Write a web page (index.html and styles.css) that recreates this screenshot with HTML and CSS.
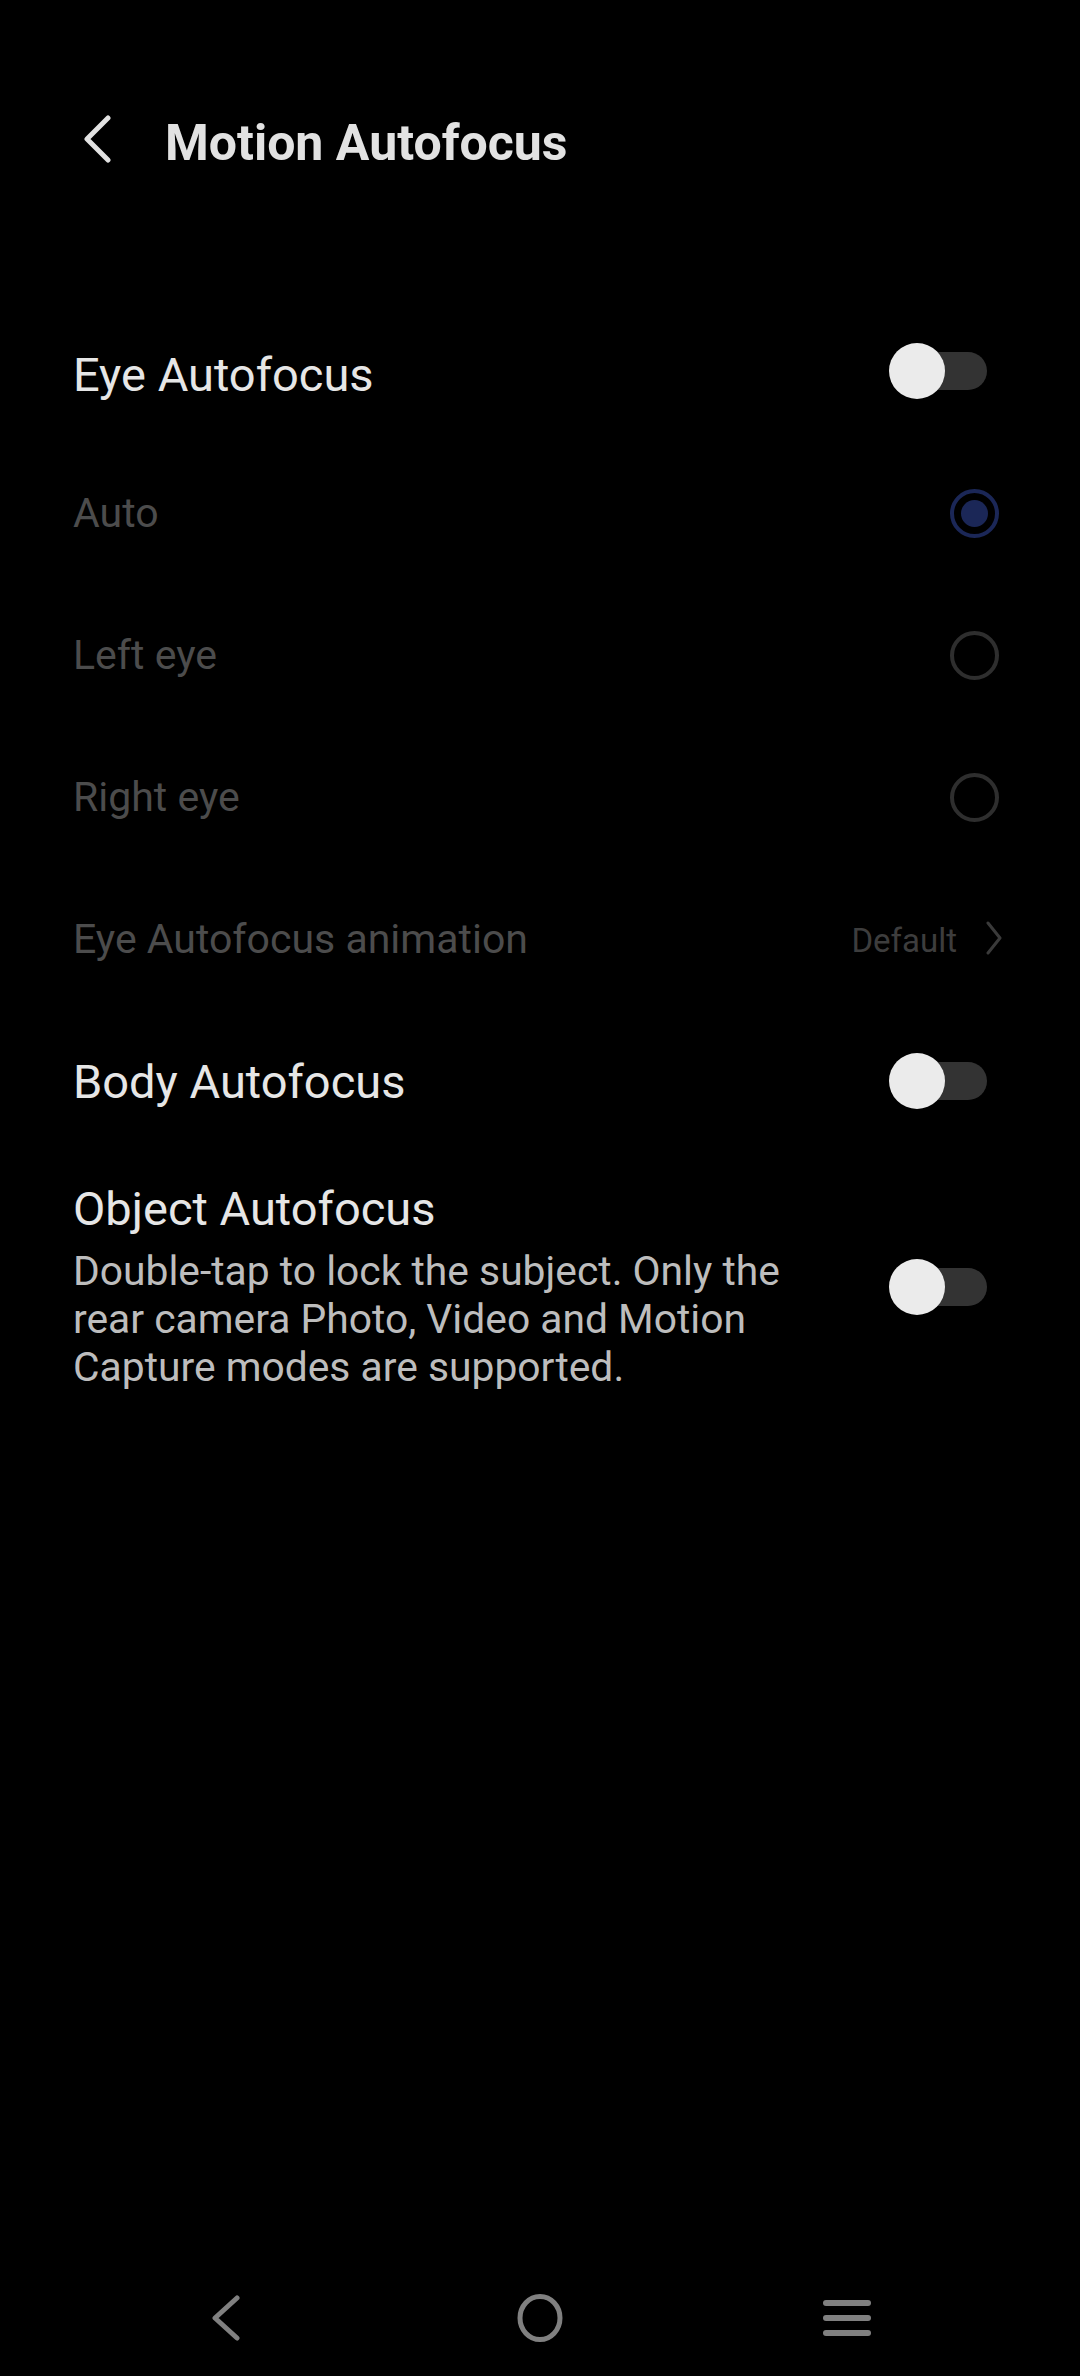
FILE: index.html
```html
<!DOCTYPE html>
<html lang="en">

<head>
  <meta charset="UTF-8">
  <meta name="viewport" content="width=device-width, initial-scale=1.0">
  <title>Motion Autofocus</title>
  <link rel="stylesheet" href="styles.css">
</head>

<body>
  <div class="screen">
    <div class="header">
      <svg class="back" width="30" height="48" viewBox="0 0 30 48">
        <polyline points="26,3 5,24 26,45" fill="none" stroke="#e2e2e2" stroke-width="5" stroke-linecap="round" stroke-linejoin="round" />
      </svg>
      <h1 class="title">Motion Autofocus</h1>
    </div>

    <div class="list">
      <div class="row">
        <span class="label first">Eye Autofocus</span>
        <div class="toggle"><div class="knob"></div></div>
      </div>
      <div class="row">
        <span class="label dim">Auto</span>
        <div class="radio selected"><div class="dot"></div></div>
      </div>
      <div class="row">
        <span class="label dim">Left eye</span>
        <div class="radio"></div>
      </div>
      <div class="row">
        <span class="label dim">Right eye</span>
        <div class="radio"></div>
      </div>
      <div class="row">
        <span class="label dim">Eye Autofocus animation</span>
        <div class="value">
          <span>Default</span>
          <svg width="18" height="34" viewBox="0 0 18 34">
            <polyline points="3,2 15,17 3,32" fill="none" stroke="#3a3a3a" stroke-width="3" stroke-linecap="round" stroke-linejoin="round" />
          </svg>
        </div>
      </div>
      <div class="row">
        <span class="label">Body Autofocus</span>
        <div class="toggle"><div class="knob"></div></div>
      </div>
      <div class="row-block">
        <div class="block-text">
          <div class="label">Object Autofocus</div>
          <div class="desc">Double-tap to lock the subject. Only the rear camera Photo, Video and Motion Capture modes are supported.</div>
        </div>
        <div class="toggle"><div class="knob"></div></div>
      </div>
    </div>

    <div class="navbar">
      <svg width="30" height="46" viewBox="0 0 30 46">
        <polyline points="26,3 4,23 26,43" fill="none" stroke="#808080" stroke-width="5" stroke-linecap="round" stroke-linejoin="round" />
      </svg>
      <svg class="home" width="48" height="50" viewBox="0 0 48 50">
        <ellipse cx="24" cy="25" rx="20" ry="21.5" fill="none" stroke="#808080" stroke-width="5" />
      </svg>
      <svg width="50" height="40" viewBox="0 0 50 40">
        <line x1="4" y1="5" x2="46" y2="5" stroke="#808080" stroke-width="6" stroke-linecap="round" />
        <line x1="4" y1="20" x2="46" y2="20" stroke="#808080" stroke-width="6" stroke-linecap="round" />
        <line x1="4" y1="35" x2="46" y2="35" stroke="#808080" stroke-width="6" stroke-linecap="round" />
      </svg>
    </div>
  </div>
</body>

</html>
```

FILE: styles.css
```css
* {
  box-sizing: border-box;
}

body {
  margin: 0;
  background: #000;
  font-family: Roboto, "Noto Sans", sans-serif;
  color: #e6e6e6;
}

.screen {
  width: 1080px;
  height: 2376px;
  display: flex;
  flex-direction: column;
}

.header {
  display: flex;
  align-items: center;
  height: 52px;
  margin-top: 117px;
  padding-left: 82px;
}

.back {
  flex-shrink: 0;
  margin-top: -8px;
}

.title {
  margin: 0 0 0 53px;
  font-size: 50px;
  font-weight: 700;
  color: #e2e2e2;
}

.list {
  padding-top: 131px;
  flex: 1;
}

.row {
  display: flex;
  align-items: center;
  justify-content: space-between;
  height: 142px;
  padding: 0 77px 0 73px;
}

.label {
  font-size: 47px;
  color: #e6e6e6;
}

.label.first {
  padding-top: 6px;
}

.dim {
  font-size: 41px;
  color: #4c4c4c;
}

.toggle {
  position: relative;
  flex-shrink: 0;
  width: 97px;
  height: 38px;
  margin-right: 16px;
  border-radius: 19px;
  background: #333;
}

.knob {
  position: absolute;
  left: -1px;
  top: -9px;
  width: 56px;
  height: 56px;
  border-radius: 50%;
  background: #ebebeb;
}

.radio {
  display: flex;
  align-items: center;
  justify-content: center;
  width: 49px;
  height: 49px;
  margin-right: 4px;
  border: 4px solid #2e2e2e;
  border-radius: 50%;
}

.radio.selected {
  border-color: #1b2757;
}

.dot {
  width: 27px;
  height: 27px;
  border-radius: 50%;
  background: #1b2757;
}

.value {
  display: flex;
  align-items: center;
  gap: 28px;
  font-size: 33px;
  color: #3d3d3d;
}

.value span {
  padding-top: 3px;
}

.value svg {
  margin-top: -3px;
}

.row-block {
  display: flex;
  align-items: flex-start;
  justify-content: space-between;
  padding: 30px 77px 0 73px;
}

.block-text {
  width: 720px;
}

.block-text .label {
  line-height: 54px;
}

.desc {
  margin-top: 11px;
  font-size: 40.8px;
  line-height: 48px;
  color: #bdbdbd;
}

.row-block .toggle {
  margin-top: 86px;
}

.navbar {
  display: flex;
  align-items: center;
  justify-content: space-between;
  height: 116px;
  padding: 0 208px 0 211px;
}

.home {
  margin-left: 17px;
}
```
